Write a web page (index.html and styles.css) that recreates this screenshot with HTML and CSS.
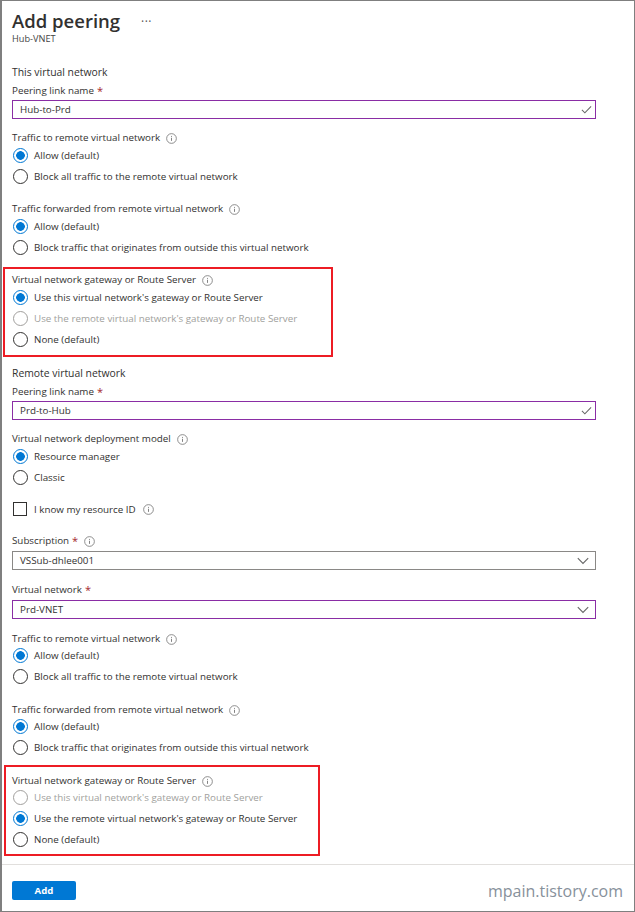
FILE: index.html
```html
<!DOCTYPE html>
<html lang="en">
<head>
    <meta charset="UTF-8">
    <title>Add peering</title>
    <link rel="stylesheet" href="styles.css">
</head>
<body>
    <svg class="icon-defs" width="0" height="0">
        <symbol id="info" viewBox="0 0 12 12">
            <circle cx="6" cy="6" r="5.3" fill="none" stroke="#777" stroke-width="0.9"/>
            <path d="M6 5.2v3.4M6 3.2v1" fill="none" stroke="#777" stroke-width="1"/>
        </symbol>
        <symbol id="check" viewBox="0 0 12 12">
            <path d="M1 6.5l3.2 3.2L11 2.5" fill="none" stroke="#666" stroke-width="1.1"/>
        </symbol>
        <symbol id="chevron" viewBox="0 0 12 8">
            <path d="M.8 1.2L6 6.4l5.2-5.2" fill="none" stroke="#666" stroke-width="1.1"/>
        </symbol>
    </svg>
    <div class="blade">
        <div class="blade-header">
            <div class="title-row">
                <h1>Add peering</h1>
                <span class="more">&middot;&middot;&middot;</span>
            </div>
            <div class="subtitle">Hub-VNET</div>
        </div>

        <div class="blade-content">
            <h2 class="section-title">This virtual network</h2>
            <div class="label">Peering link name <span class="req">*</span></div>
            <div class="input valid">Hub-to-Prd <svg class="input-icon check"><use href="#check"/></svg></div>

            <div class="group">
                <div class="label">Traffic to remote virtual network <svg class="info"><use href="#info"/></svg></div>
                <div class="radio"><span class="dot on"></span>Allow (default)</div>
                <div class="radio"><span class="dot"></span>Block all traffic to the remote virtual network</div>
            </div>
            <div class="group">
                <div class="label">Traffic forwarded from remote virtual network <svg class="info"><use href="#info"/></svg></div>
                <div class="radio"><span class="dot on"></span>Allow (default)</div>
                <div class="radio"><span class="dot"></span>Block traffic that originates from outside this virtual network</div>
            </div>
            <div class="highlight highlight-a">
                <div class="label">Virtual network gateway or Route Server <svg class="info"><use href="#info"/></svg></div>
                <div class="radio"><span class="dot on"></span>Use this virtual network's gateway or Route Server</div>
                <div class="radio disabled"><span class="dot"></span>Use the remote virtual network's gateway or Route Server</div>
                <div class="radio"><span class="dot"></span>None (default)</div>
            </div>

            <h2 class="section-title">Remote virtual network</h2>
            <div class="label">Peering link name <span class="req">*</span></div>
            <div class="input valid">Prd-to-Hub <svg class="input-icon check"><use href="#check"/></svg></div>

            <div class="group">
                <div class="label">Virtual network deployment model <svg class="info"><use href="#info"/></svg></div>
                <div class="radio"><span class="dot on"></span>Resource manager</div>
                <div class="radio"><span class="dot"></span>Classic</div>
            </div>
            <div class="checkbox-row"><span class="box"></span>I know my resource ID <svg class="info"><use href="#info"/></svg></div>

            <div class="label label-sub">Subscription <span class="req">*</span> <svg class="info"><use href="#info"/></svg></div>
            <div class="input plain input-select">VSSub-dhlee001 <svg class="input-icon chevron"><use href="#chevron"/></svg></div>
            <div class="label label-vnet">Virtual network <span class="req">*</span></div>
            <div class="input valid input-select">Prd-VNET <svg class="input-icon chevron"><use href="#chevron"/></svg></div>

            <div class="group group-lower group-after-select">
                <div class="label">Traffic to remote virtual network <svg class="info"><use href="#info"/></svg></div>
                <div class="radio"><span class="dot on"></span>Allow (default)</div>
                <div class="radio"><span class="dot"></span>Block all traffic to the remote virtual network</div>
            </div>
            <div class="group group-lower">
                <div class="label">Traffic forwarded from remote virtual network <svg class="info"><use href="#info"/></svg></div>
                <div class="radio"><span class="dot on"></span>Allow (default)</div>
                <div class="radio"><span class="dot"></span>Block traffic that originates from outside this virtual network</div>
            </div>
            <div class="highlight highlight-b">
                <div class="label">Virtual network gateway or Route Server <svg class="info"><use href="#info"/></svg></div>
                <div class="radio disabled"><span class="dot"></span>Use this virtual network's gateway or Route Server</div>
                <div class="radio"><span class="dot on"></span>Use the remote virtual network's gateway or Route Server</div>
                <div class="radio"><span class="dot"></span>None (default)</div>
            </div>
        </div>

        <div class="blade-footer">
            <button class="add-btn">Add</button>
            <span class="watermark">mpain.tistory.com</span>
        </div>
    </div>
</body>
</html>
```

FILE: styles.css
```css
body {
    margin: 0;
    font-family: 'Open Sans', sans-serif;
    font-size: 9.8px;
    color: #323130;
    background-color: #ffffff;
}
.icon-defs {
    display: block;
    height: 0;
}
.blade {
    box-sizing: border-box;
    width: 635px;
    height: 912px;
    border: 1px solid #7f7f7f;
    border-left-width: 2px;
    display: flex;
    flex-direction: column;
}
.blade-header {
    padding: 9px 0 0 10px;
    height: 50px;
    box-sizing: border-box;
}
.title-row {
    display: flex;
    align-items: center;
    height: 22px;
}
h1 {
    margin: 0;
    font-size: 18.5px;
    font-weight: 600;
    line-height: 22px;
}
.more {
    margin-left: 21px;
    font-size: 12px;
    letter-spacing: 0.5px;
    color: #555555;
}
.subtitle {
    height: 14px;
    line-height: 14px;
    font-size: 9.2px;
    color: #444444;
}
.blade-content {
    flex: 1;
    padding-left: 10px;
}
.section-title {
    margin: 13px 0 5px;
    height: 16px;
    line-height: 16px;
    font-size: 10.4px;
    font-weight: 400;
}
.highlight + .section-title {
    margin-top: 8px;
}
.label {
    height: 12px;
    line-height: 12px;
    display: flex;
    align-items: center;
    gap: 3px;
}
.group .label,
.highlight .label {
    margin-bottom: 1px;
}
.group-lower .label,
.highlight-b .label {
    margin-bottom: 0;
}
.req {
    color: #a4262c;
    font-size: 11px;
}
.info {
    width: 11px;
    height: 11px;
    margin-left: 3px;
}
.input {
    box-sizing: border-box;
    width: 584px;
    height: 19px;
    margin-top: 3px;
    padding-left: 7px;
    line-height: 16px;
    display: flex;
    align-items: center;
    justify-content: space-between;
}
.input.valid {
    border: 1px solid #8a2da5;
}
.input.plain {
    border: 1px solid #8a8886;
}
.input-select {
    margin-top: 4px;
}
.input-icon.check {
    width: 11px;
    height: 11px;
    margin-right: 3px;
}
.input-icon.chevron {
    width: 12px;
    height: 8px;
    margin-right: 6px;
}
.group {
    margin-top: 13px;
}
.group + .group {
    margin-top: 16px;
}
.group-lower + .group-lower {
    margin-top: 17px;
}
.group-after-select {
    margin-top: 14px;
}
.radio {
    height: 21px;
    display: flex;
    align-items: center;
    white-space: nowrap;
}
.dot {
    box-sizing: border-box;
    width: 15px;
    height: 15px;
    margin: 0 6px 0 1px;
    border: 1px solid #323130;
    border-radius: 50%;
    flex-shrink: 0;
}
.dot.on {
    border-color: #0078d4;
    background: radial-gradient(circle, #0078d4 0, #0078d4 4px, #ffffff 4.6px);
}
.radio.disabled {
    color: #a19f9d;
}
.radio.disabled .dot {
    border-color: #a19f9d;
}
.highlight {
    box-sizing: border-box;
    border: 2px solid #ed1c24;
}
.highlight-a {
    width: 330px;
    height: 90px;
    margin: 9px 0 0 -9px;
    padding: 5px 0 0 7px;
}
.highlight-b {
    width: 316px;
    height: 91px;
    margin: 7px 0 0 -8px;
    padding: 8px 0 0 6px;
}
.checkbox-row {
    height: 16px;
    margin-top: 13px;
    display: flex;
    align-items: center;
}
.box {
    box-sizing: border-box;
    width: 14px;
    height: 14px;
    margin: 0 7px 0 1px;
    border: 1px solid #323130;
}
.checkbox-row .info {
    margin-left: 7px;
}
.label-sub {
    margin-top: 18px;
}
.label-vnet {
    margin-top: 14px;
}
.blade-footer {
    height: 47px;
    border-top: 1px solid #e1dfdd;
    padding: 16px 10px 0;
    box-sizing: border-box;
    display: flex;
    justify-content: space-between;
}
.add-btn {
    width: 64px;
    height: 19px;
    border: none;
    border-radius: 2px;
    padding: 0;
    background-color: #0078d4;
    color: #ffffff;
    font-family: inherit;
    font-size: 9.6px;
    font-weight: 700;
}
.watermark {
    margin-right: 1px;
    font-size: 16px;
    line-height: 20px;
    color: #87919b;
}
```
